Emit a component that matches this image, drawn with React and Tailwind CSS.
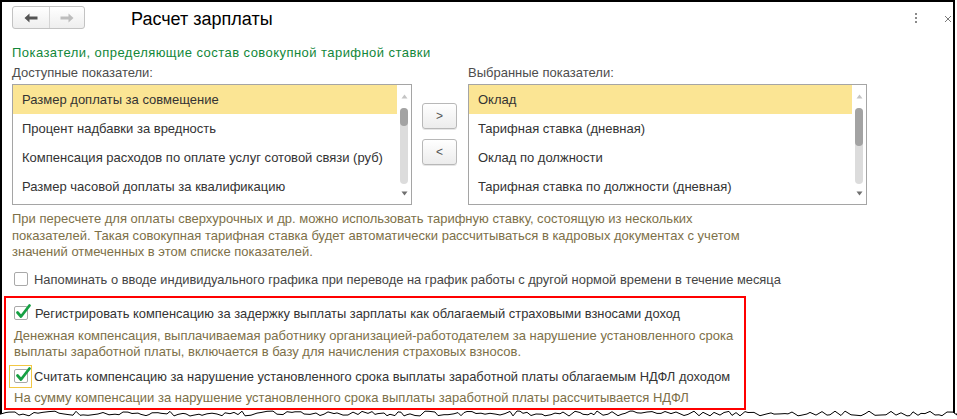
import React from "react";

const leftItems = [
  "Размер доплаты за совмещение",
  "Процент надбавки за вредность",
  "Компенсация расходов по оплате услуг сотовой связи (руб)",
  "Размер часовой доплаты за квалификацию",
];

const rightItems = [
  "Оклад",
  "Тарифная ставка (дневная)",
  "Оклад по должности",
  "Тарифная ставка по должности (дневная)",
];

function tornEdge() {
  let s = 11;
  const rnd = () => {
    s = (s * 9301 + 49297) % 233280;
    return s / 233280;
  };
  const pts = [];
  for (let x = 0; x <= 957; x += 3 + Math.floor(rnd() * 4)) {
    pts.push(`${x},${(6 + rnd() * 5).toFixed(1)}`);
  }
  pts.push("957,8");
  return pts;
}

function Scrollbar({ thumb }) {
  return (
    <div className="flex w-[14px] flex-col items-center py-[6px]">
      <svg width="7" height="5" viewBox="0 0 7 5" className="mt-[3px]">
        <path d="M3.5 0.5 L6.5 4.5 L0.5 4.5 Z" fill="#c4c4c4" />
      </svg>
      <div className="mt-[9px] h-[76px] w-[8px] rounded-full bg-[#dcdcdc]">
        <div className={`${thumb} w-[8px] rounded-full bg-[#a3a3a3]`} />
      </div>
      <div className="flex-1" />
      <svg width="7" height="5" viewBox="0 0 7 5" className="mb-[2px]">
        <path d="M0.5 0.5 L6.5 0.5 L3.5 4.5 Z" fill="#707070" />
      </svg>
    </div>
  );
}

function ListBox({ items, thumb, width }) {
  return (
    <div className={`${width} flex h-[121px] border border-[#a5a5a5] bg-white`}>
      <div className="flex-1">
        {items.map((item, i) => (
          <div
            key={item}
            className={`flex h-[29px] items-center whitespace-nowrap pl-[9px] text-[13px] text-[#333] ${
              i === 0 ? "bg-[#fbe594]" : ""
            }`}
          >
            {item}
          </div>
        ))}
      </div>
      <Scrollbar thumb={thumb} />
    </div>
  );
}

function CheckBox({ checked }) {
  return (
    <div className="relative h-[14px] w-[14px] shrink-0 rounded-[2px] border border-[#a9a9a9] bg-white">
      {checked && (
        <svg
          width="17"
          height="17"
          viewBox="0 0 17 17"
          className="absolute left-[0px] top-[-4px]"
        >
          <path
            d="M2.5 9.5 L6 13.5 L14.5 2.5"
            fill="none"
            stroke="#16a043"
            strokeWidth="2.8"
            strokeLinecap="round"
            strokeLinejoin="round"
          />
        </svg>
      )}
    </div>
  );
}

function ArrowBtn({ children }) {
  return (
    <div className="flex h-[26px] w-[35px] items-center justify-center rounded-[3px] border border-[#b8b8b8] bg-gradient-to-b from-white to-[#ececec] text-[12px] text-[#555] shadow-[0_1px_0_#e6e6e6]">
      {children}
    </div>
  );
}

export default function App() {
  const pts = tornEdge();
  return (
    <div className="relative h-[419px] w-[957px] overflow-hidden bg-white font-['Liberation_Sans',Arial,sans-serif]">
      <div className="h-[419px] w-[955px] border-x-2 border-t-2 border-black pl-[10px] pr-[10px]">
        {/* header */}
        <div className="flex h-[27px] items-start pt-[4px]">
          <div className="flex h-[23px] w-[73px] overflow-hidden rounded-[3px] border border-[#c3c3c3] bg-gradient-to-b from-white to-[#eeeeee]">
            <div className="flex w-[37px] items-center justify-center border-r border-[#d4d4d4]">
              <svg width="14" height="10" viewBox="0 0 14 10">
                <path d="M0.5 5 L5.5 0.5 L5.5 3.5 L13.5 3.5 L13.5 6.5 L5.5 6.5 L5.5 9.5 Z" fill="#545454" />
              </svg>
            </div>
            <div className="flex flex-1 items-center justify-center">
              <svg width="14" height="10" viewBox="0 0 14 10">
                <path d="M13.5 5 L8.5 0.5 L8.5 3.5 L0.5 3.5 L0.5 6.5 L8.5 6.5 L8.5 9.5 Z" fill="#bdbdbd" />
              </svg>
            </div>
          </div>
          <div className="ml-[46px] mt-[2px] text-[18px] leading-[22px] text-black">Расчет зарплаты</div>
          <div className="flex-1" />
          <div className="mr-[27px] mt-[7px] flex flex-col gap-[2px]">
            <div className="h-[2px] w-[2px] bg-[#8a8a8a]" />
            <div className="h-[2px] w-[2px] bg-[#8a8a8a]" />
            <div className="h-[2px] w-[2px] bg-[#8a8a8a]" />
          </div>
          <svg width="8" height="8" viewBox="0 0 8 8" className="mr-[-9px] mt-[9px]">
            <path d="M1 1 L7 7 M7 1 L1 7" stroke="#7a7a7a" strokeWidth="1" />
          </svg>
        </div>

        <div className="mt-[16px] whitespace-nowrap text-[13px] leading-[15px] tracking-[0.45px] text-[#12873a]">
          Показатели, определяющие состав совокупной тарифной ставки
        </div>

        <div className="mt-[5px] flex text-[13px] leading-[15px] text-[#4d4d4d]">
          <div className="w-[456px]">Доступные показатели:</div>
          <div>Выбранные показатели:</div>
        </div>

        <div className="mt-[4px] flex">
          <ListBox items={leftItems} thumb="h-[18px]" width="w-[400px]" />
          <div className="ml-[10px] mr-[11px] flex flex-col gap-[10px] pt-[19px]">
            <ArrowBtn>&gt;</ArrowBtn>
            <ArrowBtn>&lt;</ArrowBtn>
          </div>
          <ListBox items={rightItems} thumb="h-[38px]" width="w-[399px]" />
        </div>

        <div className="mt-[6px] whitespace-nowrap text-[13px] leading-[16.5px] text-[#7d7048]">
          При пересчете для оплаты сверхурочных и др. можно использовать тарифную ставку, состоящую из нескольких
          <br />
          показателей. Такая совокупная тарифная ставка будет автоматически рассчитываться в кадровых документах с учетом
          <br />
          значений отмеченных в этом списке показателей.
        </div>

        <div className="mt-[11px] flex items-center gap-[6px] pl-[2px] whitespace-nowrap text-[12.9px] leading-[15px] text-[#444]">
          <CheckBox />
          <span>Напоминать о вводе индивидуального графика при переводе на график работы с другой нормой времени в течение месяца</span>
        </div>

        <div className="ml-[-8px] mt-[9px] h-[114px] w-[742px] border-2 border-[#ff0000] pl-[8px]">
          <div className="mt-[8px] flex items-center gap-[7px] whitespace-nowrap text-[12.9px] leading-[15px] text-[#333]">
            <CheckBox checked />
            <span>Регистрировать компенсацию за задержку выплаты зарплаты как облагаемый страховыми взносами доход</span>
          </div>
          <div className="mt-[7px] whitespace-nowrap text-[13px] leading-[16px] text-[#7d7048]">
            Денежная компенсация, выплачиваемая работнику организацией-работодателем за нарушение установленного срока
            <br />
            выплаты заработной платы, включается в базу для начисления страховых взносов.
          </div>
          <div className="ml-[-5px] mt-[5px] flex items-center gap-[2px] whitespace-nowrap text-[12.9px] leading-[15px] text-[#333]">
            <div className="flex h-[23px] w-[23px] shrink-0 items-center justify-center border border-[#f2c744]">
              <CheckBox checked />
            </div>
            <span>Считать компенсацию за нарушение установленного срока выплаты заработной платы облагаемым НДФЛ доходом</span>
          </div>
          <div className="mt-[2px] whitespace-nowrap text-[13px] leading-[15px] text-[#7d7048]">
            На сумму компенсации за нарушение установленного срока выплаты заработной платы рассчитывается НДФЛ
          </div>
        </div>
      </div>

      <svg width="957" height="14" viewBox="0 0 957 14" className="absolute left-0 top-[405px]">
        <polygon points={`0,14 ${pts.join(" ")} 957,14`} fill="white" />
        <polyline points={pts.join(" ")} fill="none" stroke="black" strokeWidth="1" />
      </svg>
    </div>
  );
}
